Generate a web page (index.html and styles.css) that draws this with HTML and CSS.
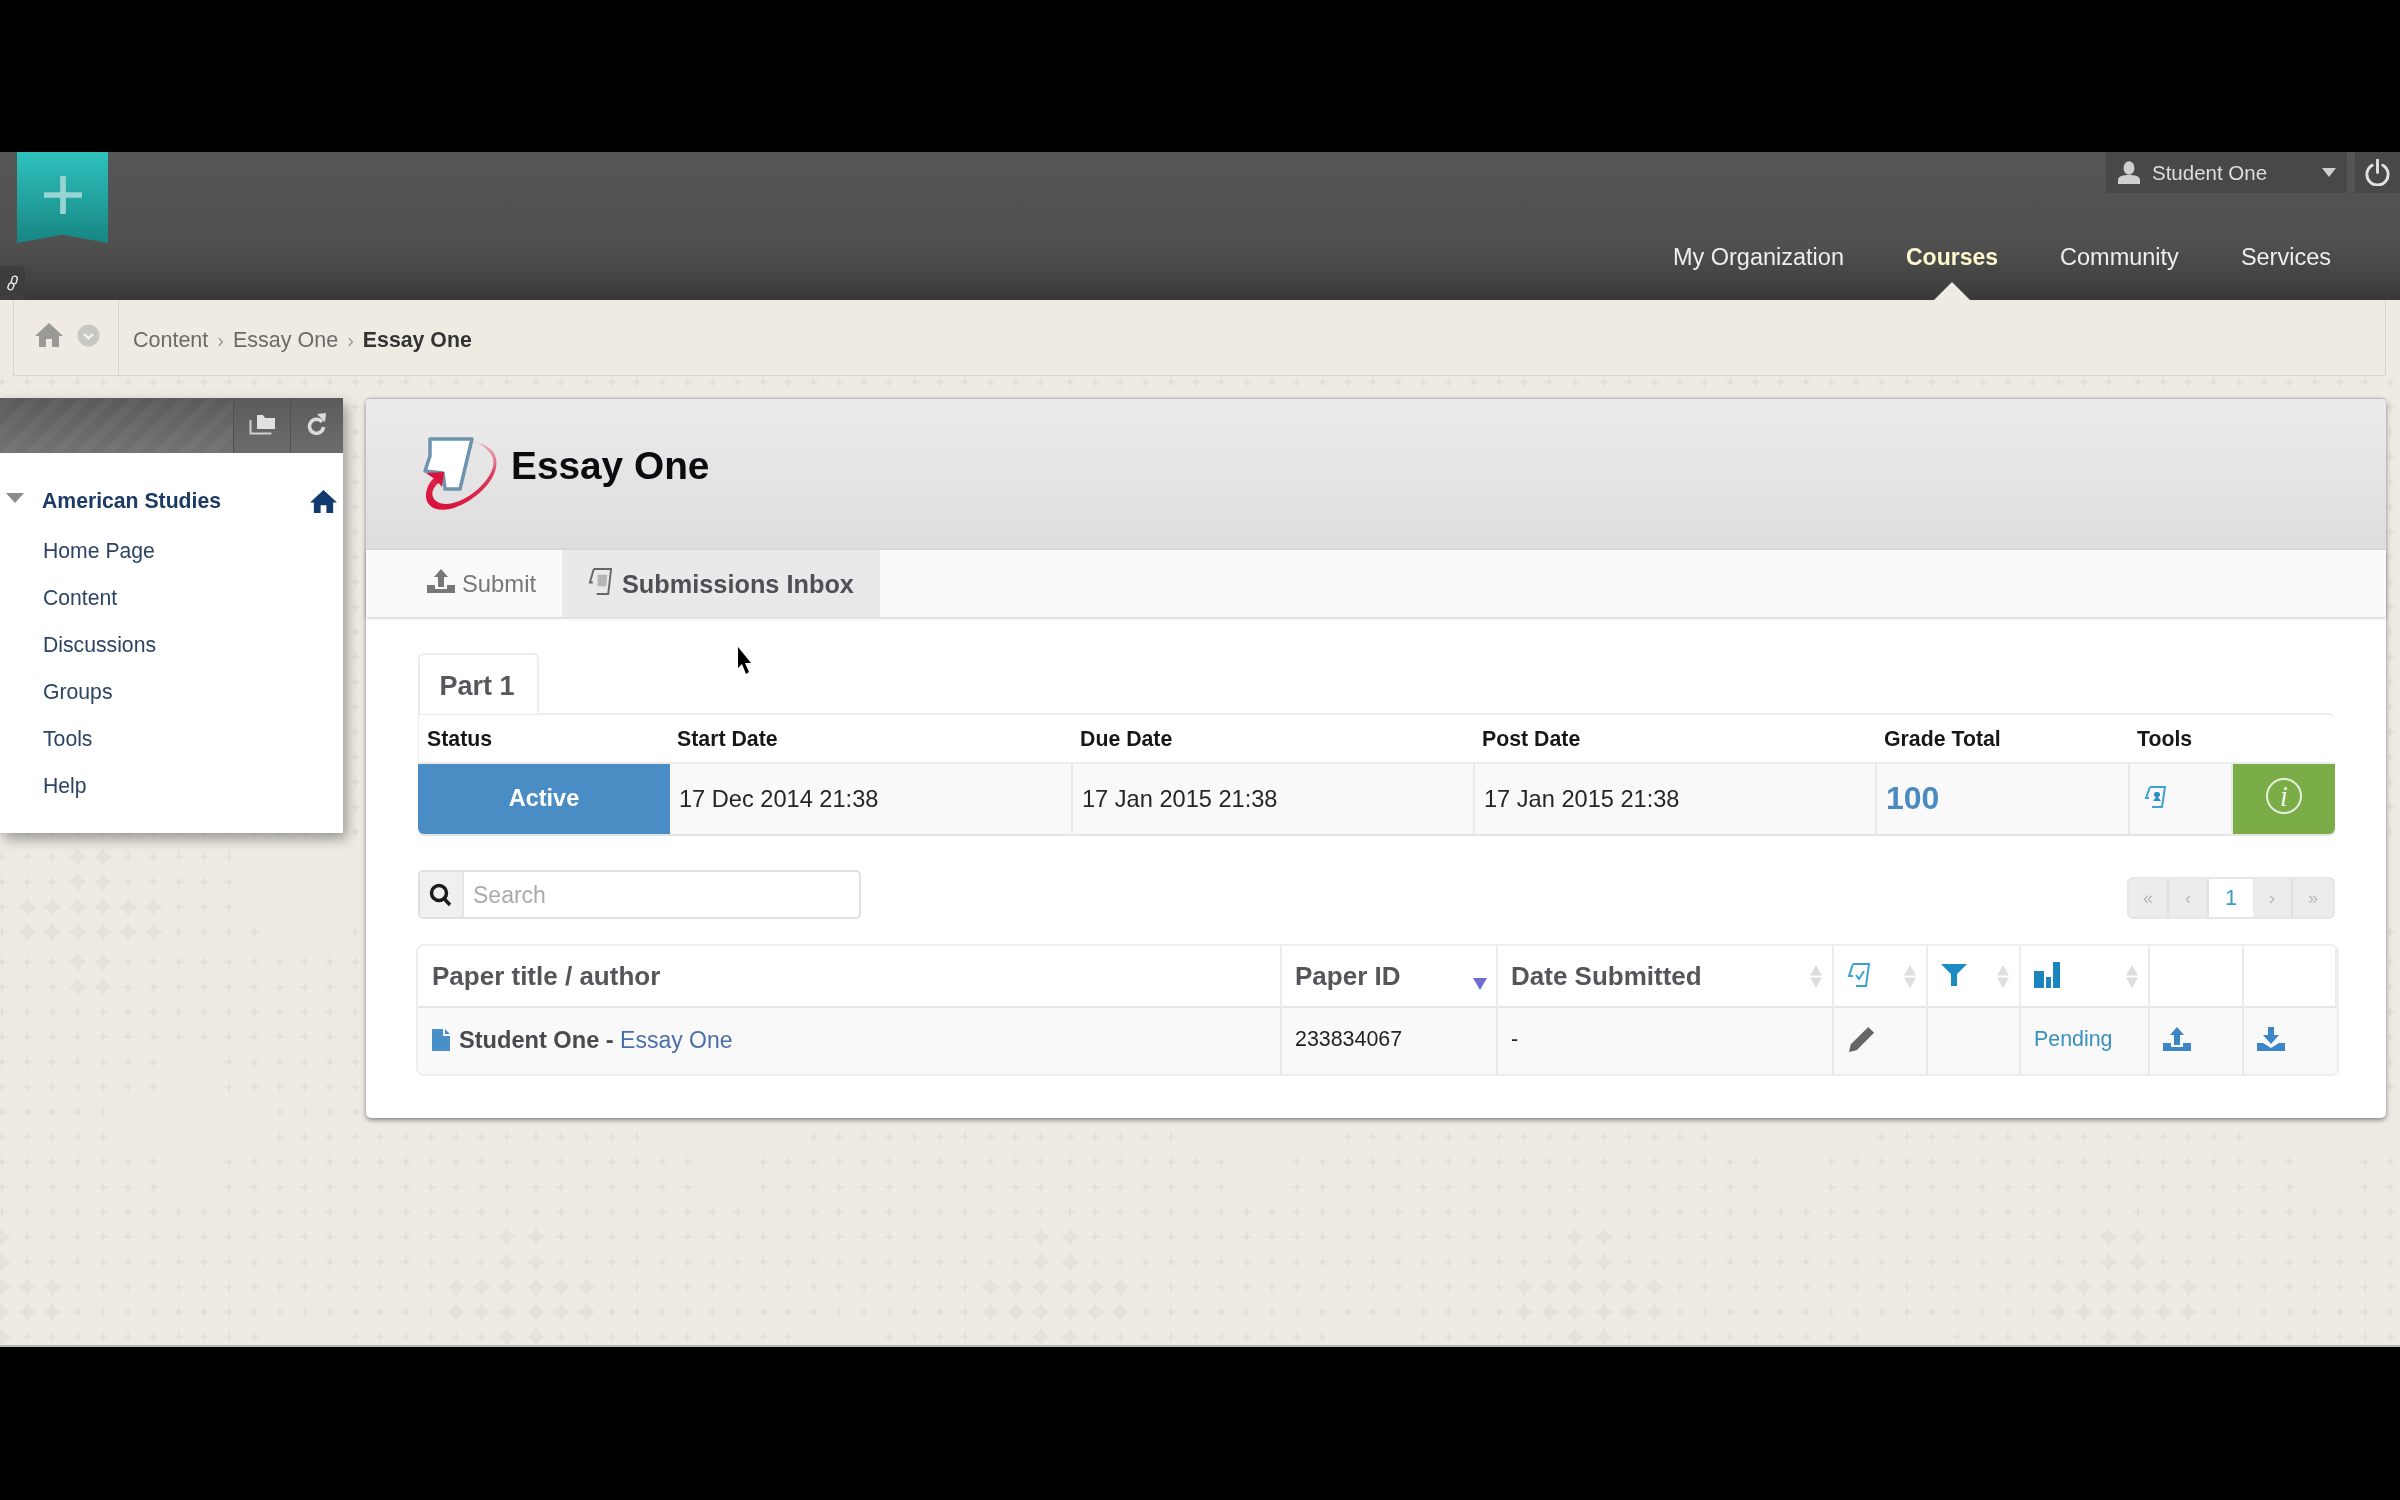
FILE: index.html
```html
<!DOCTYPE html>
<html lang="en">
<head>
<meta charset="utf-8">
<title>Essay One</title>
<link rel="stylesheet" href="styles.css">
</head>
<body>
<div class="screen">
  <header class="topbar">
    <div class="bookmark">
      <svg class="bookmark-plus" viewBox="0 0 40 40"><path d="M17 0h6v17h17v6H23v17h-6V23H0v-6h17z"/></svg>
    </div>
    <div class="link-tab">
      <svg viewBox="0 0 14 20" class="link-icon"><path d="M9 2a3 3 0 0 1 3 3l-1 4a3 3 0 0 1-3 2 3 3 0 0 1-3-3l1-3a3 3 0 0 1 3-3zM6 10a3 3 0 0 1 2 3l-1 3a3 3 0 0 1-3 2 3 3 0 0 1-3-3l1-3a3 3 0 0 1 4-2z"/></svg>
    </div>
    <div class="user-row">
      <div class="user-panel">
        <svg class="icon-user" viewBox="0 0 22 23"><ellipse cx="11" cy="7" rx="5.5" ry="6.8"/><path d="M0 23v-4c0-4 5-5 11-5s11 1 11 5v4z"/></svg>
        <span class="user-name">Student One</span>
        <span class="user-caret"></span>
      </div>
      <div class="power">
        <svg class="icon-power" viewBox="0 0 28 28"><path d="M8.5 6.5a11 11 0 1 0 11 0"/><path d="M14 1v13"/></svg>
      </div>
    </div>
    <nav class="mainnav">
      <a class="nav-item">My Organization</a>
      <a class="nav-item nav-active">Courses</a>
      <a class="nav-item">Community</a>
      <a class="nav-item">Services</a>
    </nav>
  </header>

  <div class="crumbs">
    <div class="crumb-home">
      <svg class="icon-home-grey" viewBox="0 0 28 24"><path d="M14 0l14 13h-4v11h-7v-8h-6v8H4V13H0z"/></svg>
      <svg class="icon-chevron" viewBox="0 0 24 24"><circle cx="12" cy="12" r="11.5"/><path d="M7.5 10.5l4.5 4.5 4.5-4.5"/></svg>
    </div>
    <div class="crumb-trail">
      <span>Content</span><span class="crumb-sep">›</span><span>Essay One</span><span class="crumb-sep">›</span><strong>Essay One</strong>
    </div>
  </div>

  <div class="main">
    <aside class="side">
      <div class="side-head">
        <div class="side-btn side-btn-a">
          <svg class="icon-folder" viewBox="0 0 26 22"><path class="folder-fill" d="M8 2h6l2 3h10v11H8z"/><path class="folder-tray" d="M1.500 7v13.500h21"/></svg>
        </div>
        <div class="side-btn side-btn-b">
          <svg class="icon-refresh" viewBox="0 0 20 22"><path class="refresh-arc" d="M15 9a7 7 0 1 0 1.500 5"/><path class="refresh-head" d="M10 1l9-1-1 9z"/></svg>
        </div>
      </div>
      <div class="side-body">
        <div class="side-title">
          <span class="side-caret"></span>
          <span class="side-course">American Studies</span>
          <svg class="icon-home-navy" viewBox="0 0 28 24"><path d="M14 0l14 13h-4v11h-7v-8h-6v8H4V13H0z"/></svg>
        </div>
        <ul class="side-list">
          <li>Home Page</li>
          <li>Content</li>
          <li>Discussions</li>
          <li>Groups</li>
          <li>Tools</li>
          <li>Help</li>
        </ul>
      </div>
    </aside>

    <section class="card">
      <div class="card-head">
        <svg class="logo" viewBox="0 0 90 100">
          <defs>
            <linearGradient id="swoosh" x1="0.8" y1="0" x2="0.4" y2="1">
              <stop offset="0" stop-color="#ecb4c2"/>
              <stop offset="0.35" stop-color="#de3a5c"/>
              <stop offset="1" stop-color="#d9143c"/>
            </linearGradient>
          </defs>
          <path class="logo-paper" d="M15 13h42L45 63H30l-2-16-18-2 5-15z"/>
          <path class="logo-swoosh" d="M60 17c15 1 24 11 21 25-4 18-26 36-46 41-15 3-25-3-24-15 1-8 4-12 8-16l6 4c-6 4-9 10-7 15 3 7 12 8 20 6 17-4 36-21 40-36 3-11-6-20-18-25z"/>
          <path class="logo-arrow" d="M11 47l18-1-2 15-6-7z"/>
        </svg>
        <h1 class="card-title">Essay One</h1>
      </div>
      <div class="tabs">
        <div class="tab tab-submit">
          <svg class="icon-tab-up" viewBox="0 0 28 24"><path d="M14 0l7 8h-4v10h-6V8H7zM0 16h8v4h12v-4h8v8H0z"/></svg>
          <span>Submit</span>
        </div>
        <div class="tab tab-inbox">
          <svg class="icon-tab-paper" viewBox="0 0 26 30"><path class="paper-line" d="M6 2h18l-3 26H9M6 2L2 16h3"/><path class="paper-block" d="M10 8h10l-1 12H10z"/></svg>
          <span>Submissions Inbox</span>
        </div>
      </div>

      <div class="card-body">
        <div class="part-tab">Part 1</div>
        <div class="status-grid">
          <div class="st-h">Status</div>
          <div class="st-h">Start Date</div>
          <div class="st-h">Due Date</div>
          <div class="st-h">Post Date</div>
          <div class="st-h">Grade Total</div>
          <div class="st-h">Tools</div>
          <div class="st-h"></div>
          <div class="st-active">Active</div>
          <div class="st-c">17 Dec 2014 21:38</div>
          <div class="st-c">17 Jan 2015 21:38</div>
          <div class="st-c">17 Jan 2015 21:38</div>
          <div class="st-c st-grade">100</div>
          <div class="st-c">
            <svg class="icon-tool" viewBox="0 0 22 24"><path class="line-blue" d="M6 2h15l-3 20H8M6 2L2 13h3"/><path class="fill-blue" d="M13 7a2.500 2.500 0 0 1 1 5l3 4H9l3-4a2.500 2.500 0 0 1 1-5z"/></svg>
          </div>
          <div class="st-info"><span class="info-dot">i</span></div>
        </div>

        <div class="toolbar">
          <div class="search">
            <span class="search-icon">
              <svg viewBox="0 0 24 24" class="icon-search"><circle cx="10" cy="10" r="7.500"/><path d="M15 15.500l6 6.500"/></svg>
            </span>
            <input class="search-input" type="text" placeholder="Search">
          </div>
          <div class="pager">
            <span class="pg">«</span><span class="pg">‹</span><span class="pg pg-on">1</span><span class="pg">›</span><span class="pg">»</span>
          </div>
        </div>

        <div class="inbox-grid">
          <div class="ih"><span>Paper title / author</span></div>
          <div class="ih"><span>Paper ID</span><span class="sort-down"></span></div>
          <div class="ih"><span>Date Submitted</span><svg class="sort" viewBox="0 0 12 24"><path d="M6 0l6 10.500H0zM0 12.500h12L6 23z"/></svg></div>
          <div class="ih">
            <svg class="icon-check" viewBox="0 0 24 26"><path class="line-blue" d="M6 2h16l-3 22H9M6 2L2 14h4"/><path class="line-blue" d="M9 13l3 4 5-8"/></svg>
            <svg class="sort" viewBox="0 0 12 24"><path d="M6 0l6 10.500H0zM0 12.500h12L6 23z"/></svg>
          </div>
          <div class="ih">
            <svg class="icon-filter" viewBox="0 0 26 22"><path d="M0 0h26L16 10v12h-6V10z"/></svg>
            <svg class="sort" viewBox="0 0 12 24"><path d="M6 0l6 10.500H0zM0 12.500h12L6 23z"/></svg>
          </div>
          <div class="ih">
            <svg class="icon-bars" viewBox="0 0 26 26"><path d="M0 9h10v17H0zM12 15h5v11h-5zM19 0h7v26h-7z"/></svg>
            <svg class="sort" viewBox="0 0 12 24"><path d="M6 0l6 10.500H0zM0 12.500h12L6 23z"/></svg>
          </div>
          <div class="ih"></div>
          <div class="ih"></div>

          <div class="ic ic-title">
            <svg class="icon-doc" viewBox="0 0 18 22"><path d="M0 0h11v7h7v15H0zM13 0l5 5h-5z"/></svg>
            <span class="title-text"><strong>Student One -</strong> <a class="essay-link">Essay One</a></span>
          </div>
          <div class="ic">233834067</div>
          <div class="ic">-</div>
          <div class="ic">
            <svg class="icon-pencil" viewBox="0 0 30 30"><path d="M22 2l6 6L10 26l-8 2 2-8z"/></svg>
          </div>
          <div class="ic"></div>
          <div class="ic ic-pending">Pending</div>
          <div class="ic">
            <svg class="icon-updown" viewBox="0 0 28 24"><path d="M14 0l7 8h-4v10h-6V8H7zM0 16h8v4h12v-4h8v8H0z"/></svg>
          </div>
          <div class="ic">
            <svg class="icon-updown" viewBox="0 0 28 24"><path d="M11 0h6v8h5l-8 9-8-9h5zM0 16h6l8 5 8-5h6v8H0z"/></svg>
          </div>
        </div>
      </div>
    </section>
  </div>

  <svg class="cursor" viewBox="0 0 15 27"><path d="M1 0l13 16-6 0 4 9-3 2-4-10-4 4z"/></svg>
</div>
</body>
</html>
```
FILE: styles.css
```css
* { box-sizing: border-box; }
html, body { margin: 0; padding: 0; background: #000; }
body { height: 1500px; overflow: hidden; font-family: "Liberation Sans", Arial, sans-serif; color: #222; }

.screen {
  position: relative;
  margin-top: 152px;
  height: 1195px;
  overflow: hidden;
  filter: blur(0.6px);
  border-bottom: 2px solid #b9b7b2;
  background: #eeebe4 url("data:image/svg+xml,%3Csvg xmlns='http://www.w3.org/2000/svg' width='534' height='1195'%3E%3Cdefs%3E%3Cpath id='c' fill='%23e2dfd8' d='M0-6 1.3-1.3 6 0 1.300 1.300 0 6-1.300 1.300-6 0-1.300-1.300Z'/%3E%3Cpath id='d' fill='%23e5e2db' d='M0-9.500 3.500-3.500 9.500 0 3.500 3.500 0 9.500-3.500 3.500-9.500 0-3.500-3.500Z'/%3E%3Cpattern id='p' x='3.38' y='-7.5' width='25.24' height='25' patternUnits='userSpaceOnUse'%3E%3Cuse href='%23c' x='12.62' y='12.5'/%3E%3C/pattern%3E%3Cpattern id='q' x='3.38' y='-2.5' width='25.24' height='25' patternUnits='userSpaceOnUse'%3E%3Cuse href='%23c' x='12.62' y='12.5'/%3E%3C/pattern%3E%3C/defs%3E%3Crect x='3.38' y='217.5' width='530' height='575' fill='url(%23p)'/%3E%3Crect x='3.38' y='797.5' width='530' height='401' fill='url(%23q)'/%3E%3Cg fill='%23eeebe4'%3E%3Crect x='180' y='897.5' width='50.5' height='50'/%3E%3Crect x='129.6' y='947.5' width='151.4' height='50'/%3E%3Crect x='180' y='997.5' width='50.5' height='50'/%3E%3Crect x='281' y='1172.5' width='75.7' height='25'/%3E%3Crect x='255.8' y='692.5' width='126.2' height='75'/%3E%3Crect x='281' y='767.5' width='75.7' height='25'/%3E%3C/g%3E%3Cuse href='%23d' x='91.7' y='705'/%3E%3Cuse href='%23d' x='117' y='705'/%3E%3Cuse href='%23d' x='91.7' y='730'/%3E%3Cuse href='%23d' x='117' y='730'/%3E%3Cuse href='%23d' x='41.2' y='755'/%3E%3Cuse href='%23d' x='66.5' y='755'/%3E%3Cuse href='%23d' x='91.7' y='755'/%3E%3Cuse href='%23d' x='117' y='755'/%3E%3Cuse href='%23d' x='142.2' y='755'/%3E%3Cuse href='%23d' x='167.4' y='755'/%3E%3Cuse href='%23d' x='41.2' y='780'/%3E%3Cuse href='%23d' x='66.5' y='780'/%3E%3Cuse href='%23d' x='91.7' y='780'/%3E%3Cuse href='%23d' x='117' y='780'/%3E%3Cuse href='%23d' x='142.2' y='780'/%3E%3Cuse href='%23d' x='167.4' y='780'/%3E%3Cuse href='%23d' x='91.7' y='810'/%3E%3Cuse href='%23d' x='117' y='810'/%3E%3Cuse href='%23d' x='91.7' y='835'/%3E%3Cuse href='%23d' x='117' y='835'/%3E%3Cuse href='%23d' x='520.8' y='1085'/%3E%3Cuse href='%23d' x='16' y='1085'/%3E%3Cuse href='%23d' x='520.8' y='1110'/%3E%3Cuse href='%23d' x='16' y='1110'/%3E%3Cuse href='%23d' x='470.3' y='1135'/%3E%3Cuse href='%23d' x='495.6' y='1135'/%3E%3Cuse href='%23d' x='520.8' y='1135'/%3E%3Cuse href='%23d' x='16' y='1135'/%3E%3Cuse href='%23d' x='41.2' y='1135'/%3E%3Cuse href='%23d' x='66.5' y='1135'/%3E%3Cuse href='%23d' x='470.3' y='1160'/%3E%3Cuse href='%23d' x='495.6' y='1160'/%3E%3Cuse href='%23d' x='520.8' y='1160'/%3E%3Cuse href='%23d' x='16' y='1160'/%3E%3Cuse href='%23d' x='41.2' y='1160'/%3E%3Cuse href='%23d' x='66.5' y='1160'/%3E%3Cuse href='%23d' x='520.8' y='1185'/%3E%3Cuse href='%23d' x='16' y='1185'/%3E%3C/svg%3E") -14px 0 repeat-x;
}

/* top bar */
.topbar {
  position: relative;
  height: 148px;
  background: linear-gradient(#565656 0%, #505050 62%, #444444 85%, #383838 100%);
}
.bookmark {
  position: absolute;
  left: 17px;
  top: 0;
  width: 91px;
  height: 91px;
  background: linear-gradient(#2fc2bd, #178583);
  clip-path: polygon(0 0, 100% 0, 100% 100%, 50% 91%, 0 100%);
  display: flex;
  align-items: center;
  justify-content: center;
  padding-bottom: 6px;
}
.bookmark-plus { width: 40px; height: 38px; fill: #98d4d1; }
.link-tab {
  position: absolute;
  left: 0;
  bottom: 0;
  width: 25px;
  height: 34px;
  background: #3d3d3d;
  border-top-right-radius: 5px;
  display: flex;
  align-items: center;
  justify-content: center;
}
.link-icon { width: 12px; height: 18px; fill: none; stroke: #e8e8e8; stroke-width: 1.700; }
.user-row { display: flex; justify-content: flex-end; height: 41px; gap: 8px; }
.user-panel {
  width: 241px;
  background: #484848;
  display: flex;
  align-items: center;
  padding: 0 11px 0 12px;
}
.icon-user { width: 22px; height: 23px; fill: #cfcfcf; }
.user-name { margin-left: 12px; font-size: 20.500px; color: #dedede; flex: 1; }
.user-caret {
  width: 0; height: 0;
  border-left: 7px solid transparent;
  border-right: 7px solid transparent;
  border-top: 9px solid #cfcfcf;
}
.power { width: 45px; background: #484848; display: flex; align-items: center; justify-content: center; }
.icon-power { width: 27px; height: 27px; fill: none; stroke: #e2e2e2; stroke-width: 3; stroke-linecap: round; }
.mainnav { display: flex; justify-content: flex-end; gap: 62px; padding-right: 69px; margin-top: 49px; }
.nav-item { position: relative; font-size: 23.500px; line-height: 30px; color: #eeeeee; }
.nav-active { color: #fff8cf; font-weight: 700; font-size: 23px; }
.nav-active::after {
  content: "";
  position: absolute;
  left: 50%;
  top: 40px;
  margin-left: -18px;
  width: 0; height: 0;
  border-left: 18px solid transparent;
  border-right: 18px solid transparent;
  border-bottom: 18px solid #efebe3;
}

/* breadcrumb */
.crumbs {
  display: flex;
  height: 76px;
  margin: 0 14px 0 13px;
  background: #efebe3;
  border: 1px solid #d9d5cd;
  border-top: 0;
}
.crumb-home {
  width: 105px;
  border-right: 1px solid #d9d5cd;
  display: flex;
  align-items: center;
  gap: 14px;
  padding: 0 0 5px 21px;
}
.icon-home-grey { width: 28px; height: 24px; fill: #9b9995; }
.icon-chevron { width: 23px; height: 23px; }
.icon-chevron circle { fill: #c9c7c3; }
.icon-chevron path { fill: none; stroke: #f4f2ee; stroke-width: 2.500; }
.crumb-trail { display: flex; align-items: center; padding: 5px 0 0 14px; font-size: 21.500px; color: #6b6b68; }
.crumb-trail strong { color: #333; font-size: 21.300px; }
.crumb-sep { margin: 0 9px; color: #999; font-size: 20px; }

/* main area */
.main { display: flex; align-items: flex-start; gap: 23px; margin-top: 22px; padding-right: 14px; }

.side { width: 343px; flex: none; box-shadow: 4px 6px 12px rgba(0, 0, 0, 0.35); }
.side-head {
  height: 55px;
  display: flex;
  justify-content: flex-end;
  border-top-right-radius: 4px;
  background:
    repeating-linear-gradient(-45deg, rgba(255,255,255,0.025) 0 9px, rgba(0,0,0,0.025) 9px 18px),
    linear-gradient(#5c5c5c, #747474);
}
.side-btn {
  display: flex;
  align-items: center;
  justify-content: center;
  background: linear-gradient(#5b5b5b, #6c6c6c);
  border-left: 1px solid #505050;
  padding-bottom: 4px;
}
.side-btn-a { width: 57px; }
.side-btn-b { width: 53px; }
.icon-folder { width: 26px; height: 22px; }
.folder-fill { fill: #e0e0e0; }
.folder-tray { fill: none; stroke: #cfcfcf; stroke-width: 2; }
.icon-refresh { width: 20px; height: 22px; }
.refresh-arc { fill: none; stroke: #dcdcdc; stroke-width: 3.500; }
.refresh-head { fill: #dcdcdc; }
.side-body { background: #fff; padding: 24px 6px 23px 0; height: 380px; }
.side-title { display: flex; align-items: center; height: 48px; margin-bottom: 1.500px; }
.side-caret {
  width: 0; height: 0;
  margin: 0 18px 6px 6px;
  border-left: 9.500px solid transparent;
  border-right: 9.500px solid transparent;
  border-top: 10px solid #8c8c8c;
}
.side-course { flex: 1; font-size: 21.200px; font-weight: 700; color: #1c3a66; }
.icon-home-navy { width: 27px; height: 25px; fill: #123a6e; }
.side-list { list-style: none; margin: 0; padding: 0 0 0 43px; }
.side-list li { height: 47.100px; line-height: 47.100px; font-size: 21.200px; color: #2c4364; }

.card {
  flex: 1;
  background: #fff;
  border-radius: 5px;
  border-top: 1px solid #b5b5b5;
  box-shadow: 0 2px 5px rgba(0, 0, 0, 0.45);
  padding-bottom: 44px;
}
.card-head {
  height: 151px;
  padding-left: 49px;
  display: flex;
  align-items: center;
  gap: 6px;
  background: linear-gradient(#ececec, #dddddd);
  border-radius: 5px 5px 0 0;
}
.logo { width: 90px; height: 100px; margin-top: 2px; }
.logo-paper { fill: #fff; stroke: #6d93ad; stroke-width: 3.500; stroke-linejoin: round; }
.logo-swoosh { fill: url(#swoosh); }
.logo-arrow { fill: #d9143c; }
.card-title { margin: 0 0 18px; font-size: 38.800px; font-weight: 700; color: #0c0c10; }

.tabs { display: flex; height: 67px; background: #fafafa; box-shadow: 0 1px 3px rgba(0, 0, 0, 0.22); }
.tab { display: flex; align-items: center; padding-top: 1px; }
.tab-submit { width: 196px; padding-left: 61px; gap: 7px; font-size: 23.800px; color: #77777c; }
.icon-tab-up { width: 28px; height: 24px; fill: #77777a; margin-bottom: 6px; }
.tab-inbox { width: 318px; padding-left: 26px; gap: 9px; background: #e9e9e9; font-size: 25.300px; font-weight: 700; color: #4f4f56; }
.icon-tab-paper { width: 25px; height: 29px; margin-bottom: 6px; }
.paper-line { fill: none; stroke: #66666a; stroke-width: 2; }
.paper-block { fill: #b5b5b5; }

.card-body { padding: 36px 49px 0 52px; }
.part-tab {
  width: 121px;
  height: 61px;
  margin-bottom: -1px;
  position: relative;
  background: #fff;
  border: 2px solid #ececec;
  border-bottom: 0;
  border-radius: 6px 6px 0 0;
  font-size: 27px;
  font-weight: 700;
  color: #56565c;
  display: flex;
  align-items: center;
  justify-content: center;
  padding: 3px 3px 0 0;
}
.status-grid {
  display: grid;
  width: 1917px;
  grid-template-columns: 252px 403px 402px 402px 253px 103px 102px;
  grid-template-rows: 49px 70px;
  border-top: 2px solid #ececec;
  border-radius: 0 6px 6px 6px;
  overflow: hidden;
  box-shadow: 0 2px 0 #e4e4e4;
}
.st-h { display: flex; align-items: center; padding: 1px 0 0 7px; font-size: 21.300px; font-weight: 700; color: #17171a; border-bottom: 2px solid #ececec; }
.st-h:first-child { border-left: 1px solid #ececec; padding-left: 8px; }
.st-active { display: flex; align-items: center; justify-content: center; background: #4a8cc4; color: #fff; font-size: 23.500px; font-weight: 700; padding-bottom: 2px; }
.st-c { display: flex; align-items: center; padding: 1px 0 0 9px; background: #f9f9f9; font-size: 23.600px; color: #252525; border-right: 2px solid #e9e9e9; }
.st-grade { font-size: 32px; font-weight: 700; color: #4a8ac2; padding: 0 0 2px 9px; }
.icon-tool { width: 22px; height: 24px; margin: 0 0 6px 5px; }
.line-blue { fill: none; stroke: #3ca2d2; stroke-width: 2; }
.fill-blue { fill: #2b8fc6; }
.st-info { display: flex; align-items: center; justify-content: center; background: #7aac48; padding-bottom: 6px; }
.info-dot {
  width: 36px;
  height: 36px;
  border: 2px solid #e7f0dc;
  border-radius: 50%;
  font-family: "Liberation Serif", serif;
  font-style: italic;
  font-size: 30px;
  line-height: 31px;
  color: #eef5e6;
  text-align: center;
}

.toolbar { display: flex; justify-content: space-between; align-items: flex-end; width: 1917px; margin-top: 36px; }
.search {
  display: flex;
  width: 443px;
  height: 49px;
  border: 2px solid #e0e0e0;
  border-radius: 5px;
  overflow: hidden;
  background: #fff;
}
.search-icon { width: 44px; display: flex; align-items: center; justify-content: center; background: #f0f0f0; border-right: 2px solid #e6e6e6; }
.icon-search { width: 24px; height: 24px; fill: none; stroke: #1b1b1b; stroke-width: 3.500; }
.search-input {
  flex: 1;
  min-width: 0;
  border: 0;
  outline: 0;
  padding: 2px 0 0 9px;
  background: transparent;
  font-family: inherit;
  font-size: 23px;
}
.search-input::placeholder { color: #ababab; opacity: 1; }
.pager {
  display: flex;
  height: 42px;
  background: #ececec;
  border: 2px solid #e6e6e6;
  border-radius: 6px;
  overflow: hidden;
}
.pg { width: 40px; display: flex; align-items: center; justify-content: center; border-right: 2px solid #e0e0e0; color: #b5b5b5; font-size: 18px; }
.pg:last-child { border-right: 0; }
.pg-on { width: 44px; background: #fff; color: #3a9ac8; font-size: 22px; border-right: 0; }

.inbox-grid {
  display: grid;
  width: 1919px;
  margin-top: 27px;
  grid-template-columns: 864px 216px 336px 94px 93px 129px 94px 93px;
  grid-template-rows: 62px 66px;
  border-radius: 6px;
  overflow: hidden;
  box-shadow: 0 0 0 2px #eeeeee;
}
.ih {
  display: flex;
  align-items: center;
  justify-content: space-between;
  padding: 1px 11px 0 13px;
  font-size: 26px;
  font-weight: 700;
  color: #55555a;
  border-right: 2px solid #ececec;
  border-bottom: 2px solid #e6e6e6;
}
.ih:first-child { padding-left: 14px; }
.ih:last-of-type { border-right: 0; }
.sort { width: 12px; height: 24px; fill: #dedede; margin-right: -1px; }
.sort-down {
  width: 0; height: 0;
  margin: 14px -2px 0 0;
  border-left: 7px solid transparent;
  border-right: 7px solid transparent;
  border-top: 12px solid #6e6ed2;
}
.icon-check { width: 24px; height: 26px; margin-bottom: 4px; }
.icon-filter { width: 26px; height: 22px; fill: #1a8cc0; margin-bottom: 4px; }
.icon-bars { width: 26px; height: 26px; fill: #1a86bd; margin-bottom: 4px; }
.ic {
  display: flex;
  align-items: center;
  padding: 0 0 3px 13px;
  background: #f9f9f9;
  font-size: 21.400px;
  color: #222;
  border-right: 2px solid #e9e9e9;
}
.ic:last-child { border-right: 0; }
.ic-title { padding: 0 0 2px 14px; }
.title-text { margin-left: 9px; font-size: 23px; color: #4a4a4e; }
.title-text strong { font-size: 23.600px; }
.essay-link { color: #4a6ea8; }
.icon-doc { width: 18px; height: 22px; fill: #4a90c8; }
.icon-pencil { width: 29px; height: 29px; fill: #666; }
.ic-pending { color: #3a8fc0; }
.icon-updown { width: 28px; height: 24px; fill: #3a86c6; margin-bottom: 2px; }

.cursor { position: absolute; left: 737px; top: 495px; width: 15px; height: 27px; fill: #000; }
```
